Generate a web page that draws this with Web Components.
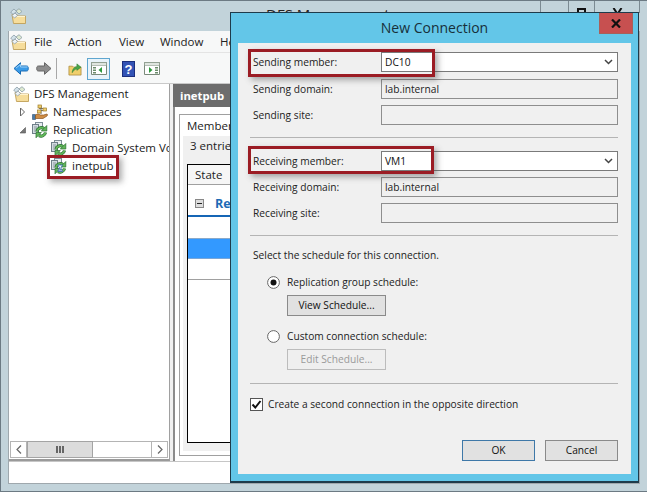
<!DOCTYPE html>
<html><head><meta charset="utf-8"><style>
html,body{margin:0;padding:0;background:#c2d3da;overflow:hidden}
</style></head><body>
<script>
const ARCS=`<path d="M5 9.500A4.500 4.500 0 0 1 12 6.500" fill="none" stroke="#2a6e32" stroke-width="3.200"/><path d="M5 9.500A4.500 4.500 0 0 1 12 6.500" fill="none" stroke="#63b85a" stroke-width="1.800"/><path d="M14.800 3.500v5.500h-5.500z" fill="#63b85a" stroke="#2a6e32" stroke-width=".7"/><path d="M13.500 10.500A4.500 4.500 0 0 1 7 13.500" fill="none" stroke="#2a6e32" stroke-width="3.200"/><path d="M13.500 10.500A4.500 4.500 0 0 1 7 13.500" fill="none" stroke="#63b85a" stroke-width="1.800"/><path d="M4 15.800v-5.300h5.300z" fill="#63b85a" stroke="#2a6e32" stroke-width=".7"/>`;
const SHEETS=`<rect x="3.500" y=".5" width="7" height="5" fill="#e7edf0" stroke="#7d8d97"/><rect x=".5" y="2.500" width="6" height="9" fill="#d3dce1" stroke="#6f7f89"/><path d="M2 5h3M2 7h3M2 9h2" stroke="#8b98a0"/>`;
const ICONS={
 folder:`<path d="M2 6.500h5l1 1.500h7.500v7.500H3.500z" fill="#f6dd9b" stroke="#bf9f57" stroke-width=".9"/><path d="M3 8.500h12" stroke="#fff3cf"/><path d="M.7 4L4 1l2.500 2.500L3 6.500z" fill="#d3e2ea" stroke="#8d9ea8" stroke-width=".8"/><path d="M6 3l3-2.300L12 3.500 9 6z" fill="#dee9cf" stroke="#8d9ea8" stroke-width=".8"/><path d="M2 7.500L5 5l2.500 2.500-3 2.500z" fill="#eef2f4" stroke="#8d9ea8" stroke-width=".8"/>`,
 ns:`<path d="M7 4.500h4M9 2v8M9 6.500h3" stroke="#555" stroke-width=".8" fill="none"/><rect x="6" y="1" width="3.500" height="3" fill="#f2cf6e" stroke="#9c7b2c" stroke-width=".7"/><rect x="11" y="4" width="3.500" height="3" fill="#f2cf6e" stroke="#9c7b2c" stroke-width=".7"/><rect x="5.500" y="6" width="3.500" height="3" fill="#f2cf6e" stroke="#9c7b2c" stroke-width=".7"/><path d="M.5 10.500h3v5h-3z" fill="#4a7ba8" stroke="#2d506e" stroke-width=".6"/><path d="M3.500 11c2-1.500 4-1 5 0h3l3.500-1c.8.500.5 1.500 0 2l-4 2.500H3.500z" fill="#cf8d45" stroke="#8a5521" stroke-width=".7"/>`,
 repl:SHEETS+ARCS,
 rg:SHEETS+ARCS+`<path d="M6.800 7h4.800L9.800 10l1.800 3.500H6.800L8.600 10z" fill="#f4f8fb" stroke="#3f6fb0" stroke-width=".9"/><path d="M7.800 12.600h2.800l-1.400-2z" fill="#3f6fb0"/>`
};
function def(name,css,html){customElements.define(name,class extends HTMLElement{
 connectedCallback(){ if(this.shadowRoot) return; const s=this.attachShadow({mode:'open'});s.innerHTML='<style>'+css+'</style>'+(typeof html==='function'?html(this):html)}})}
def('x-icon',`:host{display:flex;width:16px;height:16px;flex:none}`,el=>`<svg width="16" height="16" viewBox="0 0 16 16">${ICONS[el.getAttribute('name')]}</svg>`);
def('tree-row',`:host{display:flex;align-items:center;height:18px;padding-left:var(--ind,0);white-space:nowrap}
.x{width:10px;height:10px;flex:none;margin-right:4px}x-icon{margin-right:5px}`,
el=>{const e=el.getAttribute('exp');return `${e?`<svg class="x" viewBox="0 0 10 10">${e==='c'?'<path d="M2.500 1l4 4-4 4z" fill="#fff" stroke="#666"/>':e==='o'?'<path d="M2 8h5.500V2.500z" fill="#777" stroke="#555" stroke-width=".6"/>':''}</svg>`:''}<x-icon name="${el.getAttribute('icon')}"></x-icon><slot></slot>`});
def('mmc-tree',`:host{display:flex;flex-direction:column;width:161px;flex:none;background:#fff;box-sizing:border-box;border-right:1px solid #a0a0a0;border-bottom:2px solid #9a9a9a;padding:1px 0 0 0;overflow:hidden;color:#1a1a1a}
.rows{flex:1;padding:0 0 0 4px;overflow:hidden}
.sb{display:flex;height:17px;margin:0 1px 1px 1px;border:1px solid #b4b4b4;box-sizing:border-box;background:#fff;flex:none}
.b{width:16px;display:flex;align-items:center;justify-content:center;box-sizing:border-box;flex:none}
.l{border-right:1px solid #b4b4b4}.r{border-left:1px solid #b4b4b4;margin-left:auto}
.th{width:66px;box-sizing:border-box;background:#dcdcdc;border:1px solid #a4a4a4;margin:-1px 0;display:flex;align-items:center;justify-content:center;gap:1px}
.th i{width:2px;height:7px;background:#666}`,
`<div class="rows"><slot></slot></div><div class="sb"><div class="b l"><svg width="6" height="9" viewBox="0 0 6 9"><path d="M5 .5L1 4.500 5 8.500" fill="none" stroke="#666" stroke-width="1.200"/></svg></div><div class="th"><i></i><i></i><i></i></div><div class="b r"><svg width="6" height="9" viewBox="0 0 6 9"><path d="M1 .5L5 4.500 1 8.500" fill="none" stroke="#666" stroke-width="1.200"/></svg></div></div>`);
def('members-pane',`:host{display:flex;flex-direction:column;flex:1;margin-left:3px;background:#fff;min-width:0}
.h{height:23px;background:#6d6d6d;color:#fff;font-weight:700;display:flex;align-items:center;padding-left:7px;font-size:11.300px;flex:none;box-sizing:border-box}
.outer{flex:1;border-left:2px solid #8c8c8c;padding:7px 0 5px 4px;display:flex;min-height:0;background:#fff}
.panel{flex:1;border:1px solid #a0a0a0;border-right:0;padding:21px 0 4px 3px;background:#fff;display:flex;flex-direction:column;position:relative}
.tab{position:absolute;left:7px;top:2px;height:18px;display:flex;align-items:center}
.body{flex:1;background:#f0f0f0;padding:0 0 8px 4px;display:flex;flex-direction:column;min-height:0}
.c{height:28px;box-sizing:border-box;padding:0 0 8px 3px;display:flex;align-items:center;flex:none}
.list{flex:1;background:#fff;border:1px solid #000;border-right:0}
.st{height:20px;box-sizing:border-box;border-bottom:1px solid #a0a0a0;background:#f6f6f6;padding-left:7px;display:flex;align-items:center}
.g{height:32px;border-bottom:2px solid #1565b5;display:flex;align-items:center;padding:6px 0 0 7px;gap:11px;color:#1d6ab5;font-weight:700;font-size:12.500px;box-sizing:border-box}
.m{width:9px;height:9px;box-sizing:border-box;border:1px solid #888;background:#ddd;display:flex;align-items:center;justify-content:center}.m i{width:5px;height:1px;background:#222}
.e{height:21px}.sel{background:#3399ff;border-top:1px solid #8aa9c9;border-bottom:1px solid #79a6d8;box-sizing:border-box}.last{border-bottom:1px solid #a0a0a0;box-sizing:border-box}`,
`<div class="h">inetpub</div><div class="outer"><div class="panel"><div class="tab">Membership</div><div class="body"><div class="c">3 entries</div><div class="list"><div class="st">State</div><div class="g"><span class="m"><i></i></span><span>Re</span></div><div class="e"></div><div class="e sel"></div><div class="e last"></div></div></div></div></div>`);
def('tool-bar',`:host{display:flex;align-items:center;height:30px;padding-left:4px;background:#f7f8f8;flex:none;box-sizing:border-box;padding-top:1px}`,`<slot></slot>`);
def('menu-bar',`:host{display:flex;align-items:center;height:22px;padding-left:1px;background:#f7f8f8;flex:none;border-bottom:1px solid #e4e4e4;box-sizing:border-box}`,`<slot></slot>`);
def('menu-item',`:host{display:block;white-space:nowrap}`,`<slot></slot>`);
def('caption-bar',`:host{display:flex;height:30px;flex:none;box-sizing:border-box;padding:7px 0 0 9px;position:relative;color:#222}
.t{margin-left:240px;font-size:15px;line-height:20px;margin-top:-4px;white-space:nowrap}
.btns{position:absolute;right:7px;top:0;display:flex;height:12px;border-left:1px solid #7b8a92}
.bn{border-right:1px solid #7b8a92;display:flex;justify-content:center}`,
`<x-icon name="folder"></x-icon><span class="t">DFS Management</span><div class="btns"><div class="bn" style="width:27px"></div><div class="bn" style="width:25px"><svg width="9" height="12" viewBox="0 0 9 12" style="margin-top:7px"><path d="M1 8V1h7v7" fill="none" stroke="#111" stroke-width="2"/></svg></div><div class="bn" style="width:44px"><svg width="11" height="12" viewBox="0 0 11 12" style="margin-top:7px"><path d="M1.500 0L5.500 6 9.500 0" fill="none" stroke="#111" stroke-width="2"/></svg></div></div>`);
def('mmc-window',`:host{display:flex;flex-direction:column;position:relative;width:647px;height:492px;box-sizing:border-box;border:1px solid #6c7a83;border-right:0;background:#c2d3da;font:11.500px/1.200 "Open Sans",sans-serif;color:#222}
.client{margin:0 7px 7px 7px;flex:1;display:flex;flex-direction:column;background:#f0f0f0;border:1px solid #9fa8ad;border-top:0;min-height:0}
.main{flex:1;display:flex;background:#f0f0f0;min-height:0;border-top:1px solid #c9c9c9}
.status{height:22px;background:#fff;flex:none;border-top:1px solid #c6c6c6;box-sizing:border-box}`,
`<caption-bar></caption-bar><div class="client"><slot name="menu"></slot><slot name="tool"></slot><div class="main"><slot name="tree"></slot><slot name="pane"></slot></div><div class="status"></div></div><slot name="over"></slot>`);
def('dlg-field',`:host{display:flex;align-items:center;height:20px;margin-bottom:var(--mb,6px)}
.l{flex:none;padding-left:3px;box-sizing:border-box;width:131px}
.b{width:237px;height:100%;box-sizing:border-box;border:1px solid #8e8e8e;background:#f0f0f0;display:flex;align-items:center;padding-left:3px;justify-content:space-between}
:host([sel]) .b{background:#fff;border-color:#7a7a7a;color:#111}
svg{margin-right:4px;display:none}:host([sel]) svg{display:block}`,
el=>`<span class="l">${el.getAttribute('label')}</span><div class="b"><slot></slot><svg width="9" height="6" viewBox="0 0 9 6"><path d="M1 1l3.500 3.500L8 1" fill="none" stroke="#444" stroke-width="1.500"/></svg></div>`);
def('win-btn',`:host{display:flex;align-items:center;justify-content:center;box-sizing:border-box;height:21px;border:1px solid #8a8a8a;background:#e1e1e1;width:var(--w,99px);color:#111}
:host([off]){background:#efefef;border-color:#bcbcbc;color:#9a9a9a}
:host([def]){border-color:#3e78a8}`,`<slot></slot>`);
def('radio-opt',`:host{display:flex;align-items:center;gap:7px;height:20px;margin-left:17px;white-space:nowrap}
svg{flex:none}`,el=>`<svg width="13" height="13" viewBox="0 0 13 13"><circle cx="6.500" cy="6.500" r="5.900" fill="#fff" stroke="#666"/>${el.hasAttribute('on')?'<circle cx="6.500" cy="6.500" r="3" fill="#111"/>':''}</svg><slot></slot>`);
def('check-opt',`:host{display:flex;align-items:center;gap:5px;height:16px;white-space:nowrap}`,
`<svg width="13" height="13" viewBox="0 0 13 13"><rect x=".5" y=".5" width="12" height="12" fill="#fff" stroke="#555"/><path d="M2.500 6.500l2.800 3L10.500 3" fill="none" stroke="#111" stroke-width="2"/></svg><slot></slot>`);
def('dlg-sep',`:host{display:block;height:1px;background:#b4b4b4;margin:var(--mt,12px) 1px var(--mb2,13px) 0;flex:none}`,``);
def('new-connection',`:host{display:flex;flex-direction:column;position:absolute;left:229px;top:11px;width:409px;height:471px;box-sizing:border-box;border:1px solid #1e3b4b;border-bottom-width:2px;background:#63c6e8;padding:0 7px 7px 7px;color:#222;font-size:10.200px;line-height:1.200}
.tt{height:30px;flex:none;display:flex;align-items:center;justify-content:center;font-size:14px;color:#17303a}
.x{position:absolute;right:5px;top:0;width:34px;height:21px;background:#c75050;display:flex;align-items:center;justify-content:center;border:1px solid #a7605a;border-top:0;box-sizing:border-box}
.c{flex:1;background:#f0f0f0;padding:9px 12px 0 12px;display:flex;flex-direction:column;min-height:0}`,
`<div class="tt">New Connection</div><div class="x"><svg width="10" height="9" viewBox="0 0 10 9"><path d="M1 .5l8 8M9 .5l-8 8" stroke="#111" stroke-width="2.200"/></svg></div><div class="c"><slot></slot></div>`);
def('red-mark',`:host{display:block;position:absolute;box-sizing:border-box;border:3px solid #9b1c24;box-shadow:3px 3px 6px rgba(70,70,70,.45)}`,``);
def('btn-row',`:host{display:flex;justify-content:flex-end;gap:10px;margin-top:auto;padding:0 1px 13px 0}`,`<slot></slot>`);
def('indent-box',`:host{display:block;margin-left:37px}`,`<slot></slot>`);
def('tool-ic',`:host{display:flex;align-items:center;justify-content:center;flex:none;box-sizing:border-box;height:22px}`,`<slot></slot>`);
</script>
<mmc-window>
 <menu-bar slot="menu">
  <x-icon name="folder" style="margin-right:8px"></x-icon>
  <menu-item style="width:34px">File</menu-item><menu-item style="width:51px">Action</menu-item><menu-item style="width:41px">View</menu-item><menu-item style="width:60px">Window</menu-item><menu-item>Help</menu-item>
 </menu-bar>
 <tool-bar slot="tool">
  <tool-ic style="width:16px"><svg width="16" height="13" viewBox="0 0 16 13"><path d="M1 6.500L7.500 .7v3.300h6c1.500 0 1.800 1 1.800 2.500s-.3 2.500-1.800 2.500h-6v3.300z" fill="#3a9be8" stroke="#1a6cb5"/><path d="M3 6l4.500-3.500v2.500h7" fill="none" stroke="#9ad0f7"/></svg></tool-ic>
  <tool-ic style="width:16px;margin-left:7px"><svg width="16" height="13" viewBox="0 0 16 13"><path d="M15 6.500L8.500 .7v3.300h-6C1 4 .7 5 .7 6.500S1 9 2.500 9h6v3.300z" fill="#8d8d8d" stroke="#666"/></svg></tool-ic>
  <span style="width:1px;height:21px;background:#a8a8a8;margin:0 11px 0 4px"></span>
  <tool-ic style="width:14px"><svg width="15" height="14" viewBox="0 0 15 14"><path d="M1 4h4l1 1h8v8.500H1z" fill="#f0cf6c" stroke="#a9873a" stroke-width=".8"/><path d="M4.500 11c0-4 2.500-6.500 5-6.500V1.500L14 5 9.500 8.500V7C7.500 7 6 8.500 4.500 11z" fill="#4aa548" stroke="#2b7a2f" stroke-width=".5"/></svg></tool-ic>
  <tool-ic style="width:23px;margin-left:5px;border:1px solid #5fa6cf;background:#e9f3f9"><svg width="16" height="13" viewBox="0 0 16 13"><path d="M.5 .5h15v12H.5z" fill="#fff" stroke="#7b8a7b"/><path d="M.5 .5h15v3H.5z" fill="#dfe5df" stroke="#7b8a7b" stroke-width=".5"/><path d="M2 5h3v1.500H2zM2 7.500h3V9H2zM2 10h3v1.500H2z" fill="#6b8c6b"/><path d="M11 5v6L7.500 8z" fill="#2d9a3c"/></svg></tool-ic>
  <tool-ic style="width:13px;margin-left:12px"><svg width="13" height="16" viewBox="0 0 13 16"><rect x=".5" y=".5" width="12" height="15" fill="#3353b5" stroke="#1c2f7d"/><text x="6.500" y="13" font-family="Liberation Sans" font-weight="700" font-size="13" text-anchor="middle" fill="#fff">?</text></svg></tool-ic>
  <tool-ic style="width:16px;margin-left:9px"><svg width="16" height="13" viewBox="0 0 16 13"><path d="M.5 .5h15v12H.5z" fill="#fff" stroke="#7b8a7b"/><path d="M.5 .5h15v3H.5z" fill="#dfe5df" stroke="#7b8a7b" stroke-width=".5"/><path d="M11 5h3v1.500h-3zM11 7.500h3V9h-3zM11 10h3v1.500h-3z" fill="#6b8c6b"/><path d="M5 5v6l3.500-3z" fill="#2d9a3c"/></svg></tool-ic>
 </tool-bar>
 <mmc-tree slot="tree">
  <tree-row icon="folder">DFS Management</tree-row>
  <tree-row exp="c" icon="ns" style="--ind:5px">Namespaces</tree-row>
  <tree-row exp="o" icon="repl" style="--ind:5px">Replication</tree-row>
  <tree-row exp="n" icon="repl" style="--ind:24px">Domain System Vo</tree-row>
  <tree-row exp="n" icon="rg" style="--ind:24px">inetpub</tree-row>
 </mmc-tree>
 <members-pane slot="pane"></members-pane>
 <new-connection slot="over">
  <dlg-field sel label="Sending member:" style="--mb:7px">DC10</dlg-field>
  <dlg-field label="Sending domain:">lab.internal</dlg-field>
  <dlg-field label="Sending site:" style="--mb:0"></dlg-field>
  <dlg-sep></dlg-sep>
  <dlg-field sel label="Receiving member:">VM1</dlg-field>
  <dlg-field label="Receiving domain:">lab.internal</dlg-field>
  <dlg-field label="Receiving site:" style="--mb:0"></dlg-field>
  <dlg-sep style="--mb2:9px"></dlg-sep>
  <div style="height:20px;line-height:20px;margin:0 0 7px 3px">Select the schedule for this connection.</div>
  <radio-opt on>Replication group schedule:</radio-opt>
  <indent-box style="margin-top:3px"><win-btn>View Schedule...</win-btn></indent-box>
  <radio-opt style="margin-top:10px">Custom connection schedule:</radio-opt>
  <indent-box style="margin-top:3px"><win-btn off>Edit Schedule...</win-btn></indent-box>
  <dlg-sep style="--mt:13px;--mb2:12px"></dlg-sep>
  <check-opt>Create a second connection in the opposite direction</check-opt>
  <btn-row><win-btn def style="--w:73px">OK</win-btn><win-btn style="--w:73px">Cancel</win-btn></btn-row>
 </new-connection>
 <red-mark slot="over" style="left:46px;top:154px;width:72px;height:24px"></red-mark>
 <red-mark slot="over" style="left:247px;top:48px;width:187px;height:28px"></red-mark>
 <red-mark slot="over" style="left:247px;top:145px;width:186px;height:28px"></red-mark>
</mmc-window>
</body></html>
